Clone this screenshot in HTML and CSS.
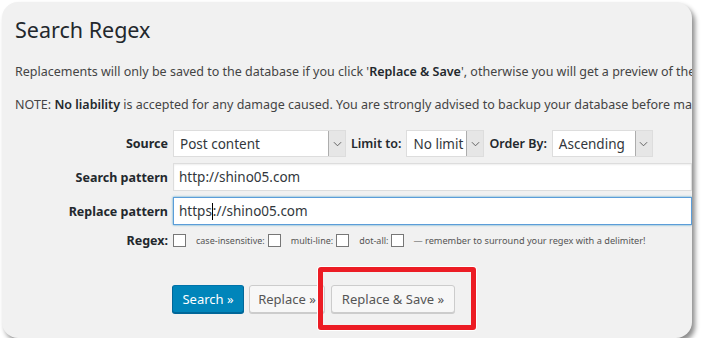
FILE: index.html
```html
<!DOCTYPE html>
<html lang="en">
<head>
  <meta charset="UTF-8" />
  <title>Search Regex</title>
  <link rel="stylesheet" href="styles.css">
</head>
<body>
  <div class="wrap">
    <h1>Search Regex</h1>
    <p>Replacements will only be saved to the database if you click '<strong>Replace &amp; Save</strong>', otherwise you will get a preview of the results.</p>
    <p>NOTE: <strong>No liability</strong> is accepted for any damage caused. You are strongly advised to backup your database before making any changes.</p>

    <div class="form">
      <div class="row">
        <label class="th">Source</label>
        <div class="select w-source"><span>Post content</span><i class="arrow"><svg viewBox="0 0 10 6" width="9" height="6"><path d="M1 1l4 4 4-4" fill="none" stroke="#555" stroke-width="1"/></svg></i></div>
        <label class="inline">Limit to:</label>
        <div class="select w-limit"><span>No limit</span><i class="arrow"><svg viewBox="0 0 10 6" width="9" height="6"><path d="M1 1l4 4 4-4" fill="none" stroke="#555" stroke-width="1"/></svg></i></div>
        <label class="inline">Order By:</label>
        <div class="select w-order"><span>Ascending</span><i class="arrow"><svg viewBox="0 0 10 6" width="9" height="6"><path d="M1 1l4 4 4-4" fill="none" stroke="#555" stroke-width="1"/></svg></i></div>
      </div>
      <div class="row">
        <label class="th">Search pattern</label>
        <div class="field">http://shino05.com</div>
      </div>
      <div class="row">
        <label class="th">Replace pattern</label>
        <div class="field focused">https<span class="caret"></span>://shino05.com</div>
      </div>
      <div class="row regex">
        <label class="th">Regex:</label>
        <span class="check"></span>
        <small>case-insensitive:</small><span class="check"></span>
        <small>multi-line:</small><span class="check"></span>
        <small>dot-all:</small><span class="check"></span>
        <small class="hint">&mdash; remember to surround your regex with a delimiter!</small>
      </div>
    </div>

    <div class="buttons">
      <button class="btn primary">Search &raquo;</button>
      <button class="btn replace">Replace &raquo;</button>
      <button class="btn save">Replace &amp; Save &raquo;</button>
    </div>

    <div class="highlight"></div>
  </div>
</body>
</html>
```

FILE: styles.css
```css
body { margin: 0; background: #fff; font-family: "Noto Sans", "Open Sans", sans-serif; color: #444; }
.wrap { position: relative; box-sizing: border-box; margin: 2px 0 0 2px; width: 690px; height: 336px; padding-left: 13px; border-radius: 16px; background: #f1f1f1; box-shadow: 3px 4px 5px rgba(0,0,0,.45); overflow: hidden; white-space: nowrap; }
h1 { margin: 0; padding-top: 13px; font-size: 21.5px; font-weight: 400; line-height: 30px; color: #23282d; }
p { margin: 17px 0 0; font-size: 12.5px; line-height: 19px; }
p + p { margin-top: 14px; }
p strong { font-weight: 600; color: #23282d; }

.form { margin-top: 16px; display: flex; flex-direction: column; gap: 6px; }
.row { display: flex; align-items: center; gap: 5px; }
.th { width: 153px; flex: none; text-align: right; font-size: 12.5px; font-weight: 700; color: #23282d; }
.inline { font-size: 12.5px; font-weight: 600; color: #23282d; }

.select { box-sizing: border-box; height: 27px; display: flex; align-items: center; background: #fff; border: 1px solid #ddd; font-size: 13.5px; color: #32373c; padding-left: 6px; }
.select span { flex: 1; }
.select .arrow { box-sizing: border-box; width: 17px; height: 25px; display: flex; align-items: center; justify-content: center; background: #e6e6e6; border-left: 1px solid #adadad; }
.w-source { width: 173px; }
.w-limit { width: 78px; }
.w-order { width: 101px; }

.field { box-sizing: border-box; width: 540px; height: 28px; display: flex; align-items: center; padding-left: 5px; background: #fff; border: 1px solid #ddd; box-shadow: inset 0 1px 2px rgba(0,0,0,.07); font-size: 13.5px; color: #32373c; }
.field.focused { border-color: #5b9dd9; box-shadow: 0 0 2px rgba(30,140,190,.8); }
.caret { width: 1px; height: 17px; background: #000; }

.regex { margin-top: 1px; gap: 0; }
.regex .th { margin-right: 5px; }
.check { box-sizing: border-box; width: 13px; height: 13px; background: #fff; border: 1px solid #777; flex: none; }
.regex small { font-size: 9px; color: #555; margin: 0 3px 0 10px; }
.regex .hint { margin-left: 9px; font-size: 9.2px; }

.buttons { margin: 36px 0 0 157px; display: flex; gap: 5px; }
.btn { box-sizing: border-box; height: 28px; padding: 0; font: 13px "Noto Sans", sans-serif; color: #555; background: #f7f7f7; border: 1px solid #ccc; border-radius: 3px; box-shadow: 0 1px 0 #ccc; }
.btn.primary { width: 72px; color: #fff; background: #0085ba; border-color: #0073aa #006799 #006799; box-shadow: 0 1px 0 #006799; }
.btn.replace { width: 76px; }
.btn.save { width: 124px; margin-left: 1px; }

.highlight { position: absolute; left: 316px; top: 265px; width: 148px; height: 53px; border: 5px solid #ec1c24; border-radius: 3px; box-shadow: 0 0 0 1px #fff; }
```
